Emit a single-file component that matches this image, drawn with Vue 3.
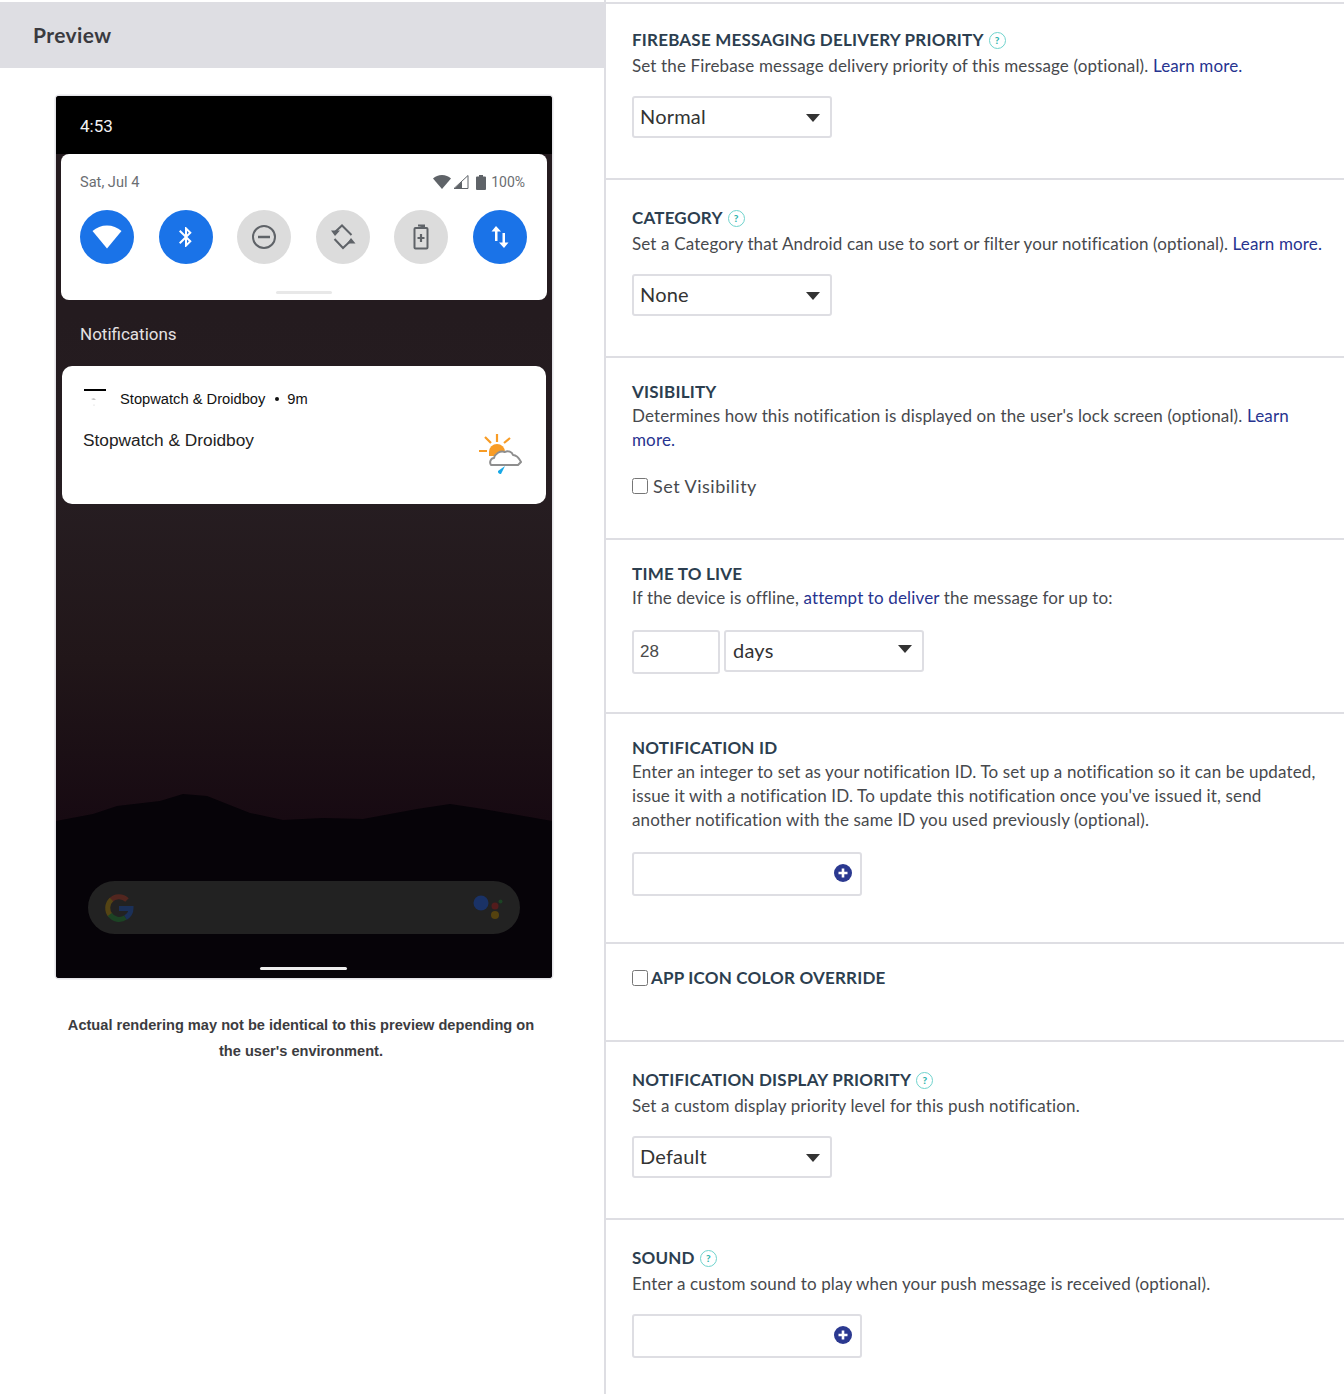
<script setup>
const toggles = [
  { id: 'wifi', on: true },
  { id: 'bluetooth', on: true },
  { id: 'dnd', on: false },
  { id: 'rotate', on: false },
  { id: 'battery', on: false },
  { id: 'data', on: true }
]
</script>

<template>
  <div class="page">
    <aside class="preview">
      <h2 class="preview-head">Preview</h2>

      <div class="phone">
        <svg class="wallpaper" viewBox="0 0 496 882" preserveAspectRatio="none">
          <path d="M0 725 L37 718 L61 710 L104 705 L127 698 L151 700 L194 717 L227 724 L267 722 L307 723 L361 713 L394 708 L427 713 L496 725 L496 882 L0 882 Z" fill="#060308" />
        </svg>

        <div class="status-bar">4:53</div>

        <div class="quick-panel">
          <div class="panel-top">
            <span>Sat, Jul 4</span>
            <span class="status-icons">
              <svg width="18" height="14" viewBox="0 0 18 14"><path d="M0 3.500C2.400 1.400 5.500 0 9 0s6.600 1.400 9 3.500L9 14z" fill="#5f6368" /></svg>
              <svg width="16" height="14" viewBox="0 0 16 14"><path d="M15 0.500V13.500H1z" fill="#fff" stroke="#5f6368" /><path d="M9 6.500V14H1z" fill="#5f6368" /></svg>
              <svg class="status-batt" width="10" height="15" viewBox="0 0 10 15"><path d="M3 0h4v1.500h2a1 1 0 0 1 1 1V14a1 1 0 0 1-1 1H1a1 1 0 0 1-1-1V2.500a1 1 0 0 1 1-1h2z" fill="#5f6368" /></svg>
              <span class="pct">100%</span>
            </span>
          </div>

          <div class="toggles">
            <div v-for="t in toggles" :key="t.id" class="toggle" :class="{ on: t.on }">
              <svg v-if="t.id === 'wifi'" width="30" height="24" viewBox="0 0 30 24"><path d="M0.500 6C4.500 2.500 9.500 0.500 15 0.500S25.500 2.500 29.500 6L15 23.500z" fill="#fff" /></svg>
              <svg v-else-if="t.id === 'bluetooth'" width="24" height="26" viewBox="0 0 24 24"><path d="M17.710 7.710L12 2h-1v7.590L6.410 5 5 6.410 10.590 12 5 17.590 6.410 19 11 14.410V22h1l5.710-5.710-4.300-4.290 4.300-4.290zM13 5.830l1.880 1.880L13 9.590V5.830zm1.880 10.460L13 18.170v-3.760l1.880 1.880z" fill="#fff" /></svg>
              <svg v-else-if="t.id === 'dnd'" width="26" height="26" viewBox="0 0 26 26"><circle cx="13" cy="13" r="11" fill="none" stroke="#5f6368" stroke-width="2" /><path d="M7 13h12" stroke="#5f6368" stroke-width="2.400" /></svg>
              <svg v-else-if="t.id === 'rotate'" width="26" height="26" viewBox="0 0 26 26"><path d="M5 8L12 1.500 21.500 11M4.500 15L13 24 21 16.500" fill="none" stroke="#5f6368" stroke-width="2" /><path d="M1 6.500H10L5 12zM17 19.500H25.500L21 14z" fill="#5f6368" /></svg>
              <svg v-else-if="t.id === 'battery'" width="18" height="26" viewBox="0 0 18 26"><path d="M6 1.500h6v2.500" fill="#5f6368" stroke="#5f6368" stroke-width="2" /><rect x="2.500" y="4" width="13" height="20.500" rx="1" fill="none" stroke="#5f6368" stroke-width="2" /><path d="M9 10v8M5.500 14h7" stroke="#5f6368" stroke-width="2.200" /></svg>
              <svg v-else width="20" height="24" viewBox="0 0 20 24"><path d="M6 1L1.500 6.500H5V16h2.500V6.500H11zM14 23l4.500-5.500H15V8h-2.500v9.500H9z" fill="#fff" /></svg>
            </div>
          </div>
          <div class="panel-handle"></div>
        </div>

        <div class="notif-label">Notifications</div>

        <div class="notif-card">
          <div class="notif-head">
            <svg class="app-icon" width="24" height="22" viewBox="0 0 24 22">
              <rect x="0" y="1" width="22" height="2" fill="#000" />
              <path d="M7 11l3-1 2 2-3 0z" fill="#c6c6c6" />
              <circle cx="10" cy="17" r="0.600" fill="#ccc" />
            </svg>
            <span class="app-name">Stopwatch &amp; Droidboy</span>
            <span class="dot"></span>
            <span>9m</span>
          </div>
          <div class="notif-body">
            <span class="notif-title">Stopwatch &amp; Droidboy</span>
            <svg class="weather" width="44" height="46" viewBox="0 0 44 46">
              <path d="M19 4v8M7 7l6 6M32 8l-6 5M1 21h8" stroke="#f89c26" stroke-width="2.200" fill="none" />
              <path d="M11 22a8 8 0 0 1 16 0v4H11z" fill="#f89c26" />
              <path d="M13 35c-2-3 0-7 3-7 1-4 6-8 11-6 3-2 7 0 8 3 3 0 6 3 8 7l-3 3z" fill="#fff" stroke="#8e8e8e" stroke-width="2" stroke-linejoin="round" />
              <path d="M27 36l-7 5a2.500 2.500 0 0 0 3 3z" fill="#18a8e6" />
            </svg>
          </div>
        </div>

        <div class="search-pill">
          <svg width="30" height="30" viewBox="0 0 30 30" fill="none" stroke-width="5">
            <path d="M23 7A11.500 11.500 0 0 0 6.500 7.500" stroke="#52261f" />
            <path d="M7.500 6.500A11.500 11.500 0 0 0 6.500 22.500" stroke="#544414" />
            <path d="M5.800 21.500A11.500 11.500 0 0 0 21.500 24.500" stroke="#1c4324" />
            <path d="M15 15.500H27C27 19 25 22.500 21.500 24.500" stroke="#1b3058" />
          </svg>
          <svg width="32" height="28" viewBox="0 0 32 28">
            <circle cx="9" cy="9" r="7.500" fill="#1a3266" />
            <circle cx="23" cy="12" r="3.500" fill="#531c1c" />
            <circle cx="23" cy="21" r="4" fill="#55420f" />
            <circle cx="28.500" cy="7.500" r="2" fill="#1c4324" />
          </svg>
        </div>
        <div class="home-bar"></div>
      </div>

      <p class="preview-note">Actual rendering may not be identical to this preview depending on the user's environment.</p>
    </aside>

    <main class="form">
      <section class="block first">
        <h3 class="title has-help">FIREBASE MESSAGING DELIVERY PRIORITY <span class="help">?</span></h3>
        <p class="desc">Set the Firebase message delivery priority of this message (optional). <a>Learn more.</a></p>
        <div class="select-wrap tight">
          <select class="select"><option>Normal</option></select>
          <span class="caret"></span>
        </div>
      </section>

      <section class="block">
        <h3 class="title has-help">CATEGORY <span class="help">?</span></h3>
        <p class="desc">Set a Category that Android can use to sort or filter your notification (optional). <a>Learn more.</a></p>
        <div class="select-wrap tight">
          <select class="select"><option>None</option></select>
          <span class="caret"></span>
        </div>
      </section>

      <section class="block">
        <h3 class="title">VISIBILITY</h3>
        <p class="desc">Determines how this notification is displayed on the user's lock screen (optional). <a>Learn more.</a></p>
        <label class="check-row"><input type="checkbox" /> Set Visibility</label>
      </section>

      <section class="block ttl">
        <h3 class="title">TIME TO LIVE</h3>
        <p class="desc">If the device is offline, <a>attempt to deliver</a> the message for up to:</p>
        <div class="ttl-row">
          <input class="num" type="text" value="28" />
          <div class="select-wrap days">
            <select class="select"><option>days</option></select>
            <span class="caret"></span>
          </div>
        </div>
      </section>

      <section class="block notif-id">
        <h3 class="title">NOTIFICATION ID</h3>
        <p class="desc">Enter an integer to set as your notification ID. To set up a notification so it can be updated, issue it with a notification ID. To update this notification once you've issued it, send another notification with the same ID you used previously (optional).</p>
        <div class="add-input">
          <svg width="18" height="18" viewBox="0 0 18 18"><circle cx="9" cy="9" r="9" fill="#2b3990" /><path d="M9 4.500v9M4.500 9h9" stroke="#fff" stroke-width="2.600" /></svg>
        </div>
      </section>

      <section class="block icon-color">
        <label class="title check-title"><input type="checkbox" /> APP ICON COLOR OVERRIDE</label>
      </section>

      <section class="block">
        <h3 class="title has-help">NOTIFICATION DISPLAY PRIORITY <span class="help">?</span></h3>
        <p class="desc">Set a custom display priority level for this push notification.</p>
        <div class="select-wrap tight">
          <select class="select"><option>Default</option></select>
          <span class="caret"></span>
        </div>
      </section>

      <section class="block sound">
        <h3 class="title has-help">SOUND <span class="help">?</span></h3>
        <p class="desc">Enter a custom sound to play when your push message is received (optional).</p>
        <div class="add-input tight">
          <svg width="18" height="18" viewBox="0 0 18 18"><circle cx="9" cy="9" r="9" fill="#2b3990" /><path d="M9 4.500v9M4.500 9h9" stroke="#fff" stroke-width="2.600" /></svg>
        </div>
      </section>
    </main>
  </div>
</template>

<style>
html, body { margin: 0; background: #fff; }
</style>

<style scoped>
.page {
  display: flex;
  width: 1344px;
  height: 1394px;
  overflow: hidden;
  font-family: Lato, "Liberation Sans", sans-serif;
  color: #47494d;
}

/* left column */
.preview { width: 604px; flex: none; padding-top: 2px; box-sizing: border-box; }
.preview-head {
  margin: 0;
  height: 66px;
  line-height: 66px;
  padding-left: 33px;
  background: #dedee3;
  color: #3a3a3f;
  font-size: 21px;
  font-weight: 700;
  letter-spacing: 0.4px;
}
.phone {
  position: relative;
  display: flex;
  flex-direction: column;
  width: 496px;
  height: 882px;
  margin: 28px 0 0 56px;
  box-shadow: 0 0 0 1.500px #e4e4e8;
  border-radius: 3px;
  overflow: hidden;
  background: linear-gradient(#241b1f 0, #241b1f 25%, #261d21 46%, #211619 64%, #170a12 82%, #120612 100%);
  font-family: Roboto, "Liberation Sans", sans-serif;
}
.wallpaper { position: absolute; left: 0; top: 0; width: 100%; height: 100%; }
.status-bar {
  position: relative;
  height: 58px;
  flex: none;
  box-sizing: border-box;
  padding: 20px 0 0 24px;
  background: #000;
  color: #f2f2f2;
  font-size: 17px;
  line-height: 20px;
}
.quick-panel {
  position: relative;
  flex: none;
  height: 146px;
  margin: 0 5px;
  box-sizing: border-box;
  padding: 18px 20px 0 19px;
  background: #fff;
  border-radius: 8px;
  color: #6b6e72;
  font-size: 14.600px;
}
.panel-top { display: flex; justify-content: space-between; align-items: center; height: 20px; }
.status-icons { display: flex; align-items: center; gap: 2px; margin-right: 2px; font-size: 14px; }
.status-batt { margin-left: 5px; }
.pct { margin-left: 3px; }
.toggles { display: flex; justify-content: space-between; margin-top: 18px; }
.toggle {
  width: 54px;
  height: 54px;
  border-radius: 50%;
  background: #dcdcdc;
  display: flex;
  align-items: center;
  justify-content: center;
}
.toggle.on { background: #1a73e8; }
.panel-handle {
  position: absolute;
  left: 215px;
  bottom: 6px;
  width: 56px;
  height: 3px;
  border-radius: 2px;
  background: #e8e8e8;
}
.notif-label {
  position: relative;
  height: 66px;
  flex: none;
  line-height: 69px;
  padding-left: 24px;
  color: #e4e1e2;
  font-size: 17px;
}
.notif-card {
  position: relative;
  flex: none;
  height: 138px;
  margin: 0 6px;
  box-sizing: border-box;
  padding: 22px 22px 0 22px;
  background: #fff;
  border-radius: 10px;
  color: #111;
  font-family: "Liberation Sans", Arial, sans-serif;
}
.notif-head { display: flex; align-items: center; height: 22px; font-size: 14.700px; }
.app-icon { margin-right: 12px; }
.dot { width: 4px; height: 4px; border-radius: 50%; background: #111; margin: 0 8px 0 10px; }
.notif-body { display: flex; justify-content: space-between; align-items: flex-start; margin-top: 19px; }
.notif-title { font-size: 17.300px; line-height: 22px; margin-left: -1px; color: #222; }
.weather { margin: 1px 2px 0 0; }
.search-pill {
  position: relative;
  flex: none;
  display: flex;
  align-items: center;
  justify-content: space-between;
  height: 53px;
  margin: auto 32px 0;
  padding: 0 16px;
  box-sizing: border-box;
  border-radius: 27px;
  background: #222;
}
.home-bar {
  position: relative;
  flex: none;
  width: 87px;
  height: 3px;
  margin: 33px 0 8px 204px;
  border-radius: 2px;
  background: #eee;
}
.preview-note {
  margin: 34px 0 0;
  padding: 0 68px 0 66px;
  text-align: center;
  color: #3c3c40;
  font: bold 14.600px/26px "Liberation Sans", Arial, sans-serif;
}

/* right column */
.form { flex: 1; border-left: 2px solid #dedee3; }
.block {
  box-sizing: border-box;
  padding: 22px 21px 40px 26px;
  border-top: 2px solid #dedee3;
  margin-top: 0;
}
.first { margin-top: 2px; padding-top: 20px; }
.title {
  display: flex;
  align-items: center;
  gap: 5px;
  margin: 0;
  height: 24px;
  color: #2c3e4f;
  font-size: 17px;
  font-weight: 700;
  letter-spacing: 0.2px;
  line-height: 24px;
}
.title.has-help { height: 30px; padding-top: 2px; box-sizing: border-box; }
.help {
  width: 15px;
  height: 15px;
  border: 1.500px solid #6fd3cd;
  border-radius: 50%;
  color: #2fb5ae;
  font-size: 10px;
  font-weight: 900;
  line-height: 15px;
  letter-spacing: 0;
  text-align: center;
}
.desc { margin: 0; font-size: 17px; line-height: 24px; letter-spacing: 0.14px; }
.desc a { color: #27338f; }
.select-wrap { position: relative; width: 200px; margin-top: 20px; }
.select-wrap.tight { margin-top: 18px; }
.select {
  display: block;
  width: 100%;
  height: 42px;
  padding: 0 30px 2px 6px;
  appearance: none;
  border: 2px solid #dedee3;
  border-radius: 3px;
  background: #fff;
  color: #333;
  font-family: Lato, "Liberation Sans", sans-serif;
  font-size: 20px;
  letter-spacing: 0.2px;
}
.caret {
  position: absolute;
  right: 12px;
  top: 18px;
  border-left: 7.500px solid transparent;
  border-right: 7.500px solid transparent;
  border-top: 8px solid #333;
}
.check-row {
  display: flex;
  align-items: center;
  gap: 5px;
  height: 24px;
  margin-top: 22px;
  font-size: 18px;
  letter-spacing: 0.5px;
}
input[type="checkbox"] { width: 16px; height: 16px; margin: 0; }
.ttl { padding-bottom: 38px; }
.ttl-row { display: flex; gap: 4px; align-items: flex-start; margin-top: 20px; }
.num {
  width: 88px;
  height: 44px;
  box-sizing: border-box;
  padding: 0 0 0 6px;
  border: 2px solid #dedee3;
  border-radius: 3px;
  color: #4a4a4a;
  font-family: "Liberation Sans", Arial, sans-serif;
  font-size: 17px;
}
.days { width: 200px; margin-top: 0; }
.days .select { padding-left: 7px; }
.days .caret { top: 15px; }
.add-input {
  display: flex;
  align-items: center;
  justify-content: flex-end;
  width: 230px;
  height: 44px;
  margin-top: 20px;
  padding: 0 8px 2px 0;
  box-sizing: border-box;
  border: 2px solid #dedee3;
  border-radius: 3px;
}
.add-input.tight { margin-top: 18px; }
.notif-id { padding-bottom: 46px; }
.icon-color { padding-bottom: 50px; }
.check-title { gap: 3px; }
</style>
